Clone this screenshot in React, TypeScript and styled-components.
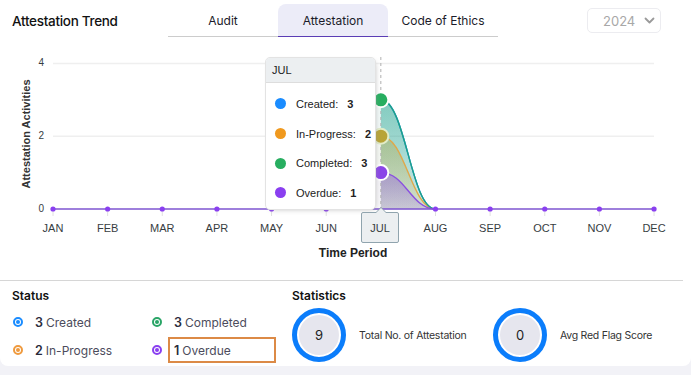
import React from 'react';
import styled, { createGlobalStyle } from 'styled-components';

const GlobalStyle = createGlobalStyle`
  body {
    margin: 0;
    background: #f2f2f7;
    font-family: Inter, "Noto Sans", sans-serif;
  }
`;

const months = ['JAN', 'FEB', 'MAR', 'APR', 'MAY', 'JUN', 'JUL', 'AUG', 'SEP', 'OCT', 'NOV', 'DEC'];
const X0 = 53;
const STEP = 54.64;
const BASE = 169;
const UNIT = 36.4;
const px = (i: number) => X0 + i * STEP;
const py = (v: number) => BASE - v * UNIT;

const series = [
  { name: 'Created', value: 3, color: '#1a8cff', line: '#1a8cff', fillTop: 0.25, fillBottom: 0.06 },
  { name: 'In-Progress', value: 2, color: '#f0991e', line: '#e0a84a', fillTop: 0.35, fillBottom: 0.12 },
  { name: 'Completed', value: 3, color: '#27ae60', line: '#1fa184', fillTop: 0.38, fillBottom: 0.12 },
  { name: 'Overdue', value: 1, color: '#8a3ff0', line: '#8a50e0', fillTop: 0.35, fillBottom: 0.15 },
];

// area for a single peak at JUL (index 6)
const peakPath = (v: number, close: boolean) => {
  const x1 = px(5);
  const x2 = px(6);
  const x3 = px(7);
  const y = py(v);
  const k = 0.45;
  const d = `M${x1},${BASE} C${x1 + (x2 - x1) * k},${BASE} ${x2 - (x2 - x1) * k},${y} ${x2},${y} C${x2 + (x3 - x2) * k},${y} ${x3 - (x3 - x2) * k},${BASE} ${x3},${BASE}`;
  return close ? `${d} Z` : d;
};

const statusItems = [
  { value: 3, label: 'Created', color: '#1a8cff' },
  { value: 3, label: 'Completed', color: '#2aa567' },
  { value: 2, label: 'In-Progress', color: '#ef9a3e' },
  { value: 1, label: 'Overdue', color: '#8a3ff0', highlight: true },
];

const Chart: React.FC = () => (
  <svg width="685" height="230" viewBox="0 0 685 230">
    <defs>
      {series.map((s) => (
        <linearGradient key={s.name} id={`g-${s.name}`} x1="0" y1="0" x2="0" y2="1">
          <stop offset="0" stopColor={s.color} stopOpacity={s.fillTop} />
          <stop offset="1" stopColor={s.color} stopOpacity={s.fillBottom} />
        </linearGradient>
      ))}
    </defs>

    {[0, 2, 4].map((v) => (
      <g key={v}>
        {v > 0 && <line x1={X0} x2={px(11)} y1={py(v)} y2={py(v)} stroke="#efefef" strokeWidth="1.5" />}
        <text x="44" y={py(v) + 3} textAnchor="end" fontSize="10" fill="#373d3f" fontFamily="Liberation Sans, Arial, sans-serif">
          {v}
        </text>
      </g>
    ))}

    <text
      transform="translate(30,94) rotate(-90)"
      textAnchor="middle"
      fontSize="11"
      fontWeight="700"
      fill="#333"
      fontFamily="Liberation Sans, Arial, sans-serif"
    >
      Attestation Activities
    </text>

    {/* left half of the peak is nearly washed out, right half carries the fill */}
    <g opacity="0.12">
      {series.map((s) => (
        <path key={`la-${s.name}`} d={peakPath(s.value, true)} fill={`url(#g-${s.name})`} stroke={s.line} strokeWidth="1" />
      ))}
    </g>
    <clipPath id="right-half">
      <rect x={px(6)} y="0" width={px(7) - px(6) + 2} height={BASE + 1} />
    </clipPath>
    <g clipPath="url(#right-half)">
      {series.map((s) => (
        <path key={`a-${s.name}`} d={peakPath(s.value, true)} fill={`url(#g-${s.name})`} />
      ))}
      {series.map((s) => (
        <path key={`l-${s.name}`} d={peakPath(s.value, false)} fill="none" stroke={s.line} strokeWidth="1.4" />
      ))}
    </g>

    <line x1={X0} x2={px(11)} y1={BASE} y2={BASE} stroke="#7e55d0" strokeWidth="1.5" />
    {months.map((m, i) => (
      <g key={m}>
        <line x1={px(i)} x2={px(i)} y1={BASE + 2} y2={BASE + 7} stroke="#e0e0e0" strokeWidth="1" />
        {i !== 6 && <circle cx={px(i)} cy={BASE} r="2.6" fill="#8a3ff0" />}
        <text
          x={px(i)}
          y={BASE + 23}
          textAnchor="middle"
          fontSize="11"
          fill="#373d3f"
          fontFamily="Liberation Sans, Arial, sans-serif"
        >
          {m}
        </text>
      </g>
    ))}

    <line x1={px(6)} x2={px(6)} y1="17" y2={BASE} stroke="#b0b0b0" strokeWidth="1" strokeDasharray="3 3" />

    <circle cx={px(6)} cy={py(3)} r="7.5" fill="#27ae60" stroke="#fff" strokeWidth="2" />
    <circle cx={px(6)} cy={py(2)} r="7.5" fill="#b8a437" stroke="#e2ecc8" strokeWidth="2" />
    <circle cx={px(6)} cy={py(1)} r="7.5" fill="#8a45e8" stroke="#fff" strokeWidth="2" />

    <text
      x="353"
      y="217"
      textAnchor="middle"
      fontSize="12"
      fontWeight="700"
      fill="#222"
      fontFamily="Liberation Sans, Arial, sans-serif"
    >
      Time Period
    </text>
  </svg>
);

const App: React.FC = () => {
  return (
    <>
      <GlobalStyle />
      <Card>
        <Header>
          <Title>Attestation Trend</Title>
          <Tabs>
            <Tab>Audit</Tab>
            <Tab $active>Attestation</Tab>
            <Tab>Code of Ethics</Tab>
          </Tabs>
          <YearSelect>
            <span>2024</span>
            <svg width="11" height="7" viewBox="0 0 11 7">
              <path d="M1.5 1.5 L5.5 5.5 L9.5 1.5" fill="none" stroke="#9a9a9a" strokeWidth="1.8" strokeLinecap="round" strokeLinejoin="round" />
            </svg>
          </YearSelect>
        </Header>

        <ChartWrap>
          <Chart />
          <Tooltip>
            <TooltipHead>JUL</TooltipHead>
            <TooltipBody>
              {series.map((s) => (
                <TooltipRow key={s.name}>
                  <Dot $color={s.color} />
                  <span>{s.name}:</span>
                  <b>{s.value}</b>
                </TooltipRow>
              ))}
            </TooltipBody>
          </Tooltip>
          <AxisTip>JUL</AxisTip>
        </ChartWrap>

        <Divider />

        <Bottom>
          <StatusCol>
            <SectionTitle>Status</SectionTitle>
            <StatusGrid>
              {statusItems.map((it) => (
                <StatusItem key={it.label}>
                  <RingIcon $color={it.color} />
                  <StatusText $highlight={!!it.highlight}>
                    <b>{it.value}</b> {it.label}
                  </StatusText>
                </StatusItem>
              ))}
            </StatusGrid>
          </StatusCol>
          <StatsCol>
            <SectionTitle>Statistics</SectionTitle>
            <StatsRow>
              <Stat>
                <Ring>9</Ring>
                <StatLabel>Total No. of Attestation</StatLabel>
              </Stat>
              <Stat>
                <Ring>0</Ring>
                <StatLabel>Avg Red Flag Score</StatLabel>
              </Stat>
            </StatsRow>
          </StatsCol>
        </Bottom>
      </Card>
    </>
  );
};

const Card = styled.div`
  width: 100%;
  height: 366px;
  background: #fff;
  border-radius: 0 0 8px 8px;
  box-sizing: border-box;
  padding-right: 6px;
`;

const Header = styled.div`
  display: flex;
  align-items: flex-start;
  height: 40px;
  padding: 0 24px 0 12px;
`;

const Title = styled.div`
  width: 156px;
  margin-top: 13px;
  font-size: 13.5px;
  font-weight: 500;
  color: #111;
  letter-spacing: -0.3px;
`;

const Tabs = styled.div`
  display: flex;
  margin-top: 4px;
`;

const Tab = styled.div<{ $active?: boolean }>`
  width: 110px;
  height: 32px;
  display: flex;
  align-items: center;
  justify-content: center;
  font-size: 12px;
  color: #1b1b2a;
  background: ${(p) => (p.$active ? '#ececf8' : 'transparent')};
  border-radius: 8px 8px 0 0;
  border-bottom: 1px solid ${(p) => (p.$active ? '#5b3db5' : '#cccccc')};
`;

const YearSelect = styled.div`
  margin-left: auto;
  margin-top: 8px;
  width: 74px;
  height: 25px;
  box-sizing: border-box;
  border: 1px solid #ececf0;
  border-radius: 5px;
  display: flex;
  align-items: center;
  justify-content: space-between;
  padding: 0 5px 0 15px;
  font-size: 13px;
  color: #a8a8a8;
`;

const ChartWrap = styled.div`
  position: relative;
  height: 230px;

  svg {
    display: block;
  }
`;

const Tooltip = styled.div`
  position: absolute;
  left: 265px;
  top: 17px;
  width: 111px;
  height: 153px;
  box-sizing: border-box;
  background: #fff;
  border: 1px solid #e3e3e3;
  border-radius: 5px;
  box-shadow: 2px 2px 6px -4px #999;
  overflow: hidden;
  font-family: "Liberation Sans", Arial, sans-serif;
  font-size: 11px;
  color: #222;
`;

const TooltipHead = styled.div`
  height: 25px;
  background: #eceff1;
  border-bottom: 1px solid #dddddd;
  display: flex;
  align-items: center;
  padding-left: 6px;
  box-sizing: border-box;
`;

const TooltipBody = styled.div`
  padding-top: 6px;
`;

const TooltipRow = styled.div`
  height: 29.7px;
  display: flex;
  align-items: center;
  padding-left: 9px;

  b {
    margin-left: 9px;
  }
`;

const Dot = styled.span<{ $color: string }>`
  width: 11px;
  height: 11px;
  border-radius: 50%;
  background: ${(p) => p.$color};
  margin-right: 10px;
`;

const AxisTip = styled.div`
  position: absolute;
  left: 361px;
  top: 172px;
  width: 38px;
  height: 31px;
  box-sizing: border-box;
  background: #eceff1;
  border: 1px solid #90a4ae;
  border-radius: 2px;
  display: flex;
  align-items: center;
  justify-content: center;
  font-family: "Liberation Sans", Arial, sans-serif;
  font-size: 11px;
  color: #373d3f;

  &::before {
    content: '';
    position: absolute;
    top: -6px;
    left: 13px;
    border: 6px solid transparent;
    border-top: 0;
    border-bottom-color: #90a4ae;
  }

  &::after {
    content: '';
    position: absolute;
    top: -5px;
    left: 14px;
    border: 5px solid transparent;
    border-top: 0;
    border-bottom-color: #eceff1;
  }
`;

const Divider = styled.div`
  margin-top: 10px;
  border-top: 1px solid #d6d6d6;
  margin-right: 2px;
`;

const Bottom = styled.div`
  display: flex;
  padding-top: 8px;
`;

const StatusCol = styled.div`
  flex: none;
  width: 292px;
  box-sizing: border-box;
  padding-left: 12px;
`;

const SectionTitle = styled.div`
  font-size: 12px;
  font-weight: 600;
  line-height: 14px;
  color: #111;
`;

const StatusGrid = styled.div`
  display: grid;
  grid-template-columns: 139px 1fr;
  row-gap: 2px;
  margin-top: 6px;
`;

const StatusItem = styled.div`
  display: flex;
  align-items: center;
  height: 26px;
  padding-left: 1px;
`;

const RingIcon = styled.span<{ $color: string }>`
  width: 10px;
  height: 10px;
  box-sizing: border-box;
  border: 2px solid ${(p) => p.$color};
  border-radius: 50%;
  position: relative;
  margin-right: 6px;

  &::after {
    content: '';
    position: absolute;
    left: 50%;
    top: 50%;
    width: 4px;
    height: 4px;
    margin: -2px 0 0 -2px;
    border-radius: 50%;
    background: ${(p) => p.$color};
  }
`;

const StatusText = styled.div<{ $highlight: boolean }>`
  height: 26px;
  width: 108px;
  box-sizing: border-box;
  display: flex;
  align-items: center;
  gap: 3px;
  padding-left: 4px;
  border: 2px solid ${(p) => (p.$highlight ? '#dc8a46' : 'transparent')};
  font-size: 12px;
  color: #4c4c5c;
  white-space: nowrap;

  b {
    font-size: 12.5px;
    color: #2a2a3a;
    font-weight: 600;
  }
`;

const StatsCol = styled.div`
  flex: 1;
`;

const StatsRow = styled.div`
  display: flex;
  margin-top: 5px;
`;

const Stat = styled.div`
  width: 201px;
  display: flex;
  align-items: center;
`;

const Ring = styled.div`
  width: 54px;
  height: 54px;
  box-sizing: border-box;
  border-radius: 50%;
  border: 5px solid #0b7dfb;
  background: #e6e6ee;
  box-shadow: inset 0 0 0 2px #fff;
  display: flex;
  align-items: center;
  justify-content: center;
  font-size: 13px;
  color: #222;
  margin-right: 13px;
`;

const StatLabel = styled.div`
  font-size: 10.5px;
  color: #333;
  letter-spacing: -0.25px;
`;

export default App;
